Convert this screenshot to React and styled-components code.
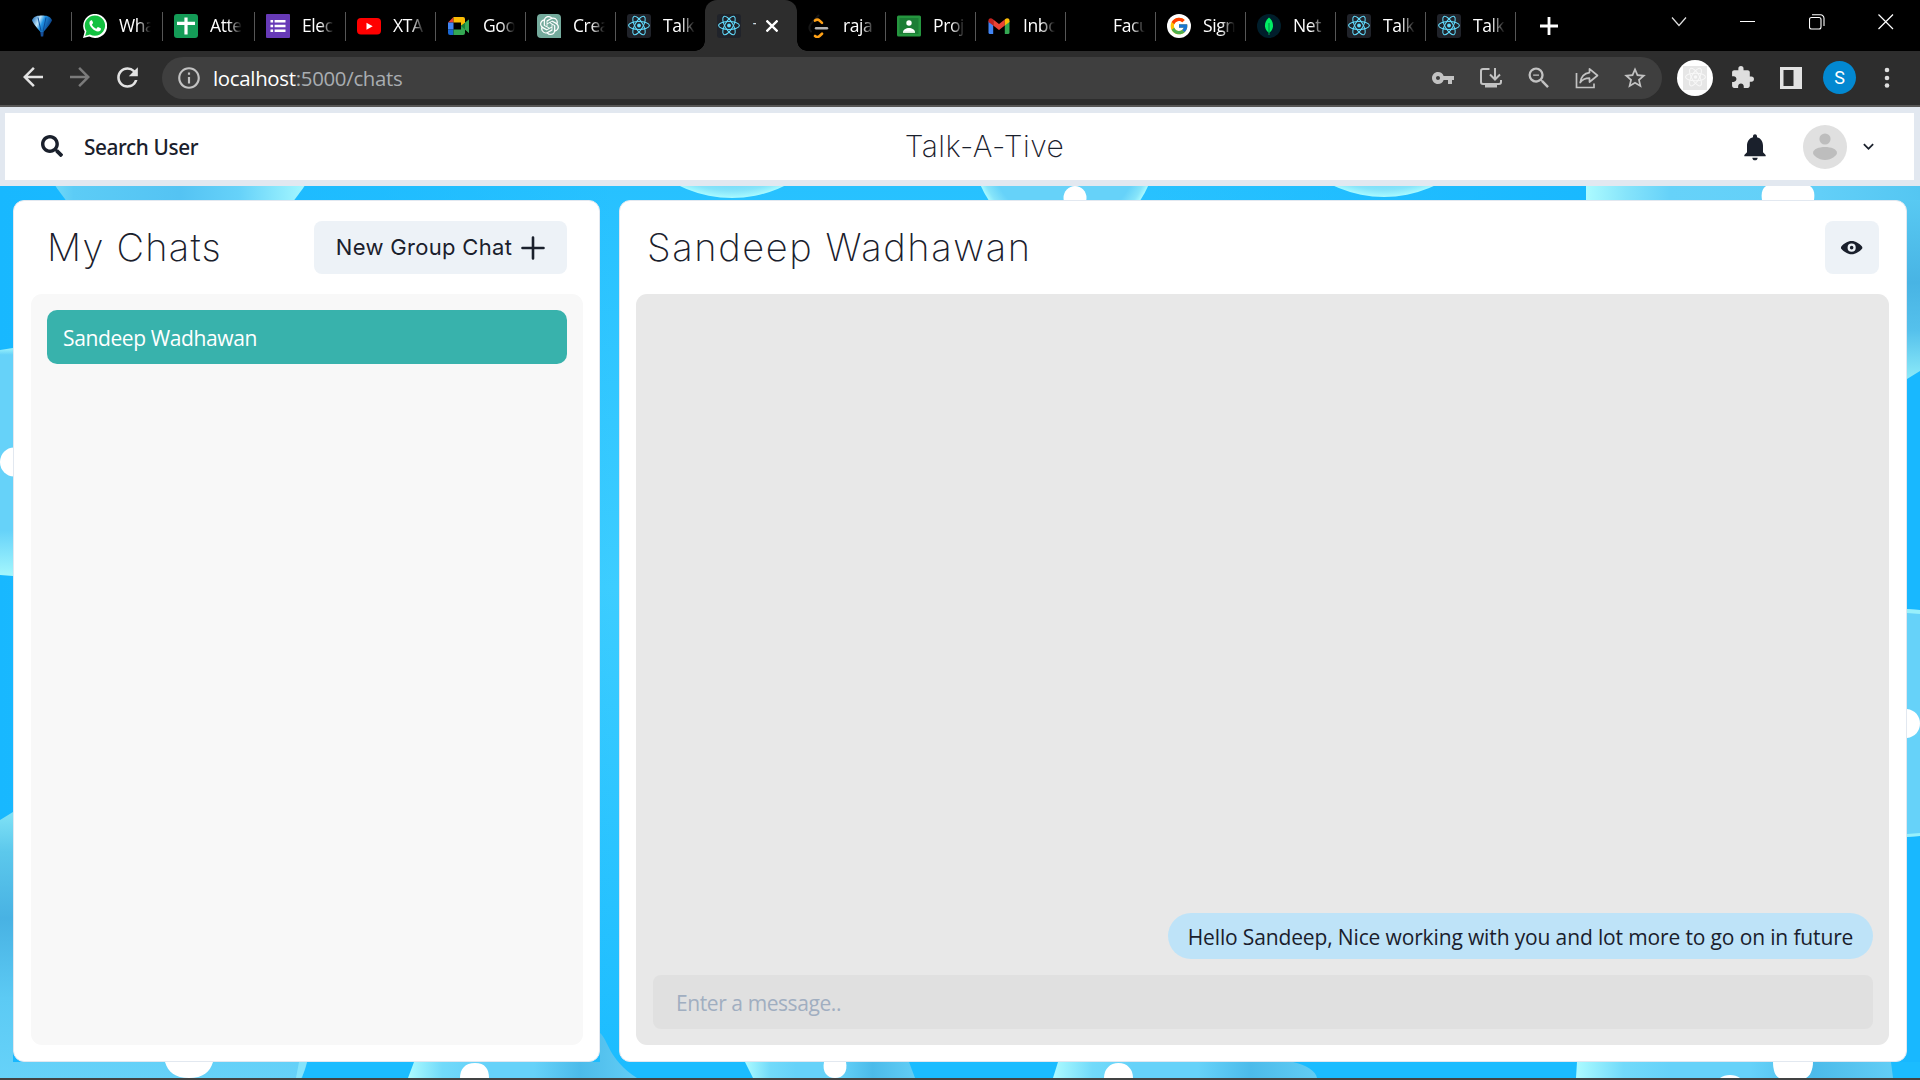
import React from 'react';
import styled, { createGlobalStyle, css } from 'styled-components';
import {
  MdVpnKey,
  MdZoomOut,
  MdStarBorder,
  MdExtension,
  MdRefresh,
  MdArrowBack,
  MdArrowForward,
  MdInfoOutline,
} from 'react-icons/md';
import { FaSearch } from 'react-icons/fa';
import { FcGoogle } from 'react-icons/fc';
import { SiOpenai } from 'react-icons/si';

const uiFont = "'Open Sans', 'Noto Sans', sans-serif";
const displayFont = "Inter, 'Open Sans', sans-serif";
const ink = '#1a202c';

const GlobalStyle = createGlobalStyle`
  *, *::before, *::after { box-sizing: border-box; }
  body { margin: 0; overflow: hidden; font-family: ${uiFont}; color: ${ink}; }
  svg { display: block; flex: none; }
  button, input { font: inherit; color: inherit; border: 0; padding: 0; background: none; }
`;

const Window = styled.div`
  display: flex;
  flex-direction: column;
  width: 1920px;
  height: 1080px;
  border-bottom: 2px solid #434343;
  overflow: hidden;
`;

/* ---------- tab strip ---------- */

const TabStrip = styled.div`
  display: flex;
  height: 51px;
  flex: none;
  background: #000;
`;

const Tab = styled.div`
  position: relative;
  display: flex;
  align-items: center;
  width: ${(p) => p.$width}px;
  padding-left: ${(p) => p.$pad ?? 11}px;
  color: #fff;
  ${(p) =>
    p.$divider &&
    css`
      &::after {
        content: '';
        position: absolute;
        right: 0;
        top: 12px;
        width: 1px;
        height: 29px;
        background: #565656;
      }
    `}
  ${(p) =>
    p.$active &&
    css`
      background: #2d2d2d;
      border-radius: 12px 12px 0 0;
      margin: 0 -1px;
      width: ${p.$width + 2}px;
      padding-left: 12px;
      &::before,
      &::after {
        content: '';
        position: absolute;
        bottom: 0;
        width: 10px;
        height: 10px;
      }
      &::before {
        left: -10px;
        background: radial-gradient(circle at 0 0, transparent 9.5px, #2d2d2d 10px);
      }
      &::after {
        right: -10px;
        background: radial-gradient(circle at 100% 0, transparent 9.5px, #2d2d2d 10px);
      }
    `}
`;

const Favicon = styled.div`
  display: flex;
  align-items: center;
  justify-content: center;
  width: 24px;
  height: 24px;
  flex: none;
  border-radius: ${(p) => p.$radius || 0};
  background: ${(p) => p.$bg || 'transparent'};
  color: ${(p) => p.$color || '#fff'};
`;

const TabTitle = styled.span`
  width: 32px;
  margin-left: 12px;
  padding-bottom: 1px;
  overflow: hidden;
  white-space: nowrap;
  font-size: 17.5px;
  line-height: 26px;
  letter-spacing: -0.4px;
  mask-image: linear-gradient(to right, #000 56%, transparent 100%);
`;

const ActiveTitle = styled.span`
  width: 3px;
  height: 18px;
  margin-left: 12px;
  overflow: hidden;
  font-size: 17.5px;
  line-height: 24px;
  color: #d8d8d8;
`;

const TabClose = styled.button`
  display: flex;
  margin-left: 10px;
`;

const NewTab = styled.button`
  display: flex;
  align-items: center;
  margin-left: 24px;
`;

const WindowControls = styled.div`
  display: flex;
  align-items: flex-start;
  gap: 48px;
  margin-left: auto;
  padding: 14px 26px 0 0;
`;

/* ---------- address bar ---------- */

const Toolbar = styled.div`
  display: flex;
  align-items: center;
  height: 56px;
  flex: none;
  padding: 0 21px 1px 20px;
  background: #2d2d2d;
  border-bottom: 2px solid #575655;
`;

const NavGroup = styled.div`
  display: flex;
  width: 142px;
  margin-left: -11px;
`;

const NavButton = styled.button`
  display: flex;
  justify-content: center;
  width: 48px;
  color: ${(p) => (p.$dim ? '#7b7b7b' : '#e2e2e2')};
`;

const Omnibox = styled.div`
  display: flex;
  align-items: center;
  width: 1500px;
  height: 42px;
  margin-left: 11px;
  padding: 0 14px;
  border-radius: 21px;
  background: #3f3f3f;
  color: #c2c2c2;
`;

const Url = styled.div`
  margin-left: 11px;
  font-size: 20.4px;
  line-height: 28px;
  letter-spacing: -0.3px;
  white-space: nowrap;
  color: #a9adb1;
  b { font-weight: 400; color: #fff; }
`;

const OmniActions = styled.div`
  display: flex;
  align-items: center;
  gap: 21px;
  margin-left: auto;
`;

const ActionSlot = styled.div`
  display: flex;
  align-items: center;
  justify-content: center;
  width: 27px;
  height: 27px;
`;

const Extensions = styled.div`
  display: flex;
  align-items: center;
  flex: 1;
  margin-left: 15px;
  color: #dedede;
`;

const ExtensionBadge = styled.div`
  display: flex;
  align-items: center;
  justify-content: center;
  width: 36px;
  height: 36px;
  margin-right: 17px;
  border-radius: 50%;
  background: #fff;
`;

const ExtensionIcon = styled.div`
  display: flex;
  align-items: center;
  justify-content: center;
  width: 24px;
  height: 24px;
  background: #e6e6e6;
`;

const SidePanelButton = styled.button`
  display: flex;
  margin: 0 21px 0 25px;
`;

const Profile = styled.div`
  width: 33px;
  height: 33px;
  border-radius: 50%;
  background: #0288d1;
  color: #fff;
  font: 400 18px/33px Roboto, sans-serif;
  text-align: center;
`;

const MenuButton = styled.button`
  display: flex;
  margin-left: auto;
`;

/* ---------- chat app ---------- */

const Page = styled.div`
  display: flex;
  flex-direction: column;
  flex: 1;
  min-height: 0;
`;

const Header = styled.header`
  display: grid;
  grid-template-columns: 1fr auto 1fr;
  align-items: center;
  height: 79px;
  flex: none;
  padding: 0 35px 0 35px;
  border: solid #e2e8f0;
  border-width: 6px 6px 6px 5px;
  background: #fff;
`;

const SearchButton = styled.button`
  display: flex;
  align-items: center;
  gap: 20px;
  font: 500 20.8px/32px 'Noto Sans', sans-serif;
  letter-spacing: -0.4px;
`;

const SearchIcon = styled(FaSearch)`
  margin: 0 1px 2px 1px;
`;

const Brand = styled.h1`
  margin: 0 0 2px 50px;
  font: 250 30px/40px ${displayFont};
  letter-spacing: 0.5px;
`;

const HeaderRight = styled.div`
  display: flex;
  align-items: center;
  justify-content: flex-end;
`;

const Avatar = styled.div`
  width: 44px;
  height: 44px;
  margin: 0 11px 0 32px;
  border-radius: 50%;
  overflow: hidden;
  background: #e0e0e0;
`;

const Workspace = styled.main`
  display: grid;
  grid-template: 892px / 1920px;
  flex: 1;
`;

const Backdrop = styled.svg`
  grid-area: 1 / 1;
`;

const Columns = styled.div`
  grid-area: 1 / 1;
  z-index: 1;
  display: flex;
  justify-content: space-between;
  padding: 14px 13px 16px;
`;

const Panel = styled.section`
  display: flex;
  flex-direction: column;
  width: ${(p) => p.$width}px;
  padding: 20px ${(p) => p.$right}px 16px ${(p) => p.$left}px;
  border: 1px solid #e2e8f0;
  border-radius: 11px;
  background: #fff;
`;

const PanelHeader = styled.div`
  display: flex;
  align-items: center;
  justify-content: space-between;
  height: 53px;
  margin-bottom: 20px;
  padding: 0 ${(p) => p.$right}px 0 ${(p) => p.$left}px;
`;

const PanelTitle = styled.h2`
  margin: 0;
  font: 200 38px/53px ${displayFont};
  letter-spacing: ${(p) => p.$spacing}px;
  white-space: nowrap;
`;

const SoftButton = styled.button`
  display: flex;
  align-items: center;
  justify-content: center;
  gap: 9px;
  width: ${(p) => p.$width}px;
  height: 53px;
  border-radius: 8px;
  background: #edf2f7;
  font: 400 22px/32px ${displayFont};
  letter-spacing: 0.32px;
  white-space: nowrap;
`;

const ButtonLabel = styled.span`
  padding-bottom: 2px;
`;

const PanelBody = styled.div`
  display: flex;
  flex-direction: column;
  justify-content: ${(p) => p.$justify || 'flex-start'};
  flex: 1;
  padding: 16px 16px 16px ${(p) => p.$left || 16}px;
  border-radius: 11px;
  background: ${(p) => p.$bg};
`;

const ChatItem = styled.div`
  height: 54px;
  padding: 0 16px;
  border-radius: 10px;
  background: #38b2ac;
  color: #fff;
  font-size: 21px;
  line-height: 57px;
  letter-spacing: -0.38px;
`;

const Bubble = styled.div`
  align-self: flex-end;
  width: 705px;
  height: 46px;
  border-radius: 27px;
  background: #bee3f8;
  font-size: 21px;
  line-height: 49px;
  letter-spacing: -0.14px;
  text-align: center;
  white-space: nowrap;
`;

const MessageInput = styled.input`
  width: 100%;
  height: 54px;
  margin-top: 16px;
  padding: 2px 23px 0;
  border-radius: 8px;
  background: #e0e0e0;
  font-size: 21px;
  letter-spacing: -0.42px;
  &::placeholder { color: #a0aec0; opacity: 1; }
`;

/* ---------- drawings ---------- */

const Atom = ({ color = '#61dafb', size = 24 }) => (
  <svg width={size} height={size} viewBox="0 0 24 24" fill="none" stroke={color} strokeWidth="1.05">
    <circle cx="12" cy="11.5" r="1.9" fill={color} stroke="none" />
    <ellipse cx="12" cy="11.5" rx="10.4" ry="4" />
    <ellipse cx="12" cy="11.5" rx="10.4" ry="4" transform="rotate(60 12 11.5)" />
    <ellipse cx="12" cy="11.5" rx="10.4" ry="4" transform="rotate(120 12 11.5)" />
  </svg>
);

const Balloon = () => (
  <svg width="24" height="24" viewBox="0 0 24 24">
    <defs>
      <linearGradient id="balloon" x1="0" y1="0" x2="1" y2="0.4">
        <stop offset="0" stopColor="#0d5fae" />
        <stop offset="0.4" stopColor="#bfe6fb" />
        <stop offset="0.6" stopColor="#1f93e6" />
        <stop offset="1" stopColor="#0a3f86" />
      </linearGradient>
    </defs>
    <path d="M2 6C4 2 8 1.5 12 1.5S20 2 22 6c0 2-6 9-8.5 12h-3C8 15 2 8 2 6z" fill="url(#balloon)" />
    <path d="M8 3.5L11 17M16 3.5L13.2 17" stroke="#0c4f9c" strokeWidth="1" />
    <path d="M10.3 18h3.4l-.5 4.5h-2.3z" fill="#164f99" />
  </svg>
);

const WhatsApp = () => (
  <svg width="24" height="24" viewBox="0 0 24 24">
    <path d="M0 24l1.7-6.2A12 12 0 1 1 6.3 22.4z" fill="#fff" />
    <path d="M2.1 21.9l1.3-4.6A10.2 10.2 0 1 1 7 20.6z" fill="#13c140" />
    <path
      d="M8.3 6.3c-.5 0-1.9.9-1.9 2.8 0 2 1.5 3.9 2.9 5.4 1.6 1.6 3.7 2.9 5.7 2.9 1.8 0 2.9-1.2 2.9-2.4 0-.6-.2-.7-.6-.9l-1.9-.9c-.5-.2-.7-.1-1 .3l-.8 1c-.3.3-.5.3-.9.1-1.5-.7-2.9-2-3.7-3.5-.2-.4-.1-.6.2-.9l.7-.9c.2-.2.2-.5.1-.8l-.8-1.8c-.2-.4-.4-.4-.9-.4z"
      fill="#fff"
    />
  </svg>
);

const Cross = () => (
  <svg width="24" height="24" viewBox="0 0 24 24">
    <path d="M12 3.5v17M3 9.3h18" stroke="#fff" strokeWidth="3.2" />
  </svg>
);

const FormLines = () => (
  <svg width="24" height="24" viewBox="0 0 24 24" fill="#fff">
    <path d="M4.5 6h2.6v2.6H4.5zM4.5 10.700h2.6v2.6H4.5zM4.5 15.400h2.6V18H4.5zM8.6 6H19.5v2.6H8.6zM8.6 10.700h10.9v2.6H8.6zM8.6 15.400h10.9V18H8.6z" />
  </svg>
);

const YouTube = () => (
  <svg width="24" height="24" viewBox="0 0 24 24">
    <rect x="0" y="4" width="24" height="16.5" rx="4" fill="#f00" />
    <path d="M9.5 8.7v7l6.2-3.500z" fill="#fff" />
  </svg>
);

const Meet = () => (
  <svg width="24" height="24" viewBox="0 0 24 24">
    <path d="M1 8.5L6.5 3v5.5z" fill="#ea4335" />
    <path d="M1 8.5h5.5v7H1z" fill="#4285f4" />
    <path d="M1 15.5h5.5V21H3a2 2 0 0 1-2-2z" fill="#1967d2" />
    <path d="M6.5 3H16a2 2 0 0 1 2 2v4l-4 3V8.5H6.5z" fill="#fbbc04" />
    <path d="M6.5 15.5H14V12l4-3v10a2 2 0 0 1-2 2H6.5z" fill="#34a853" />
    <path d="M14 12l8-6.5v13.5z" fill="#188038" />
    <path d="M18 8.8l4-3.3V19l-4-3.400z" fill="#34a853" />
  </svg>
);

const Leetcode = () => (
  <svg width="24" height="24" viewBox="0 0 24 24" fill="none" strokeLinecap="round">
    <path d="M11.500 1.500L4 9.500c-2 3-2 6 0 8" stroke="#161616" strokeWidth="2" />
    <path d="M8 6.600c1.500-1.300 3.200-1.300 4.600 0l2.400 2.300" stroke="#ffa116" strokeWidth="2.6" />
    <path d="M8 22c1.500 1.300 3.200 1.300 4.600 0l2.400-2.300" stroke="#ffa116" strokeWidth="2.6" />
    <path d="M9 14.200h11" stroke="#b3b3b3" strokeWidth="2.4" />
  </svg>
);

const Classroom = () => (
  <svg width="24" height="24" viewBox="0 0 24 24">
    <rect y="1.5" width="24" height="21" rx="1.5" fill="#25963f" />
    <rect x="2.5" y="4" width="19" height="16" fill="#1b7d35" />
    <circle cx="12" cy="9" r="2.7" fill="#fff" />
    <path d="M6 18.5c0-6 12-6 12 0z" fill="#fff" />
    <path d="M6 17.500h12v1.500H6z" fill="#d7ecd9" />
  </svg>
);

const Gmail = () => (
  <svg width="24" height="24" viewBox="0 0 24 24">
    <path d="M1.5 7v11.500A1.500 1.500 0 0 0 3 20h3.200V10.500z" fill="#4285f4" />
    <path d="M22.500 7v11.500A1.500 1.500 0 0 1 21 20h-3.200V10.500z" fill="#34a853" />
    <path d="M6.200 5.500L12 10l5.800-4.500v6L12 16l-5.800-4.500z" fill="#ea4335" />
    <path d="M1.500 6.500c0-2.200 2.500-3 4.100-1.600l.6.600v6L1.500 8z" fill="#c5221f" />
    <path d="M22.500 6.500c0-2.200-2.500-3-4.100-1.600l-.6.600v6L22.500 8z" fill="#fbbc04" />
  </svg>
);

const MongoLeaf = () => (
  <svg width="24" height="24" viewBox="0 0 24 24">
    <path d="M12 3.500c3.400 3 4.200 6 4 9-.2 2.600-1.600 4.700-4 6.500-2.400-1.800-3.800-3.900-4-6.500-.2-3 .6-6 4-9z" fill="#00ed64" />
    <path d="M12 9v12" stroke="#00934a" strokeWidth="1.1" />
  </svg>
);

const InstallIcon = () => (
  <svg width="24" height="24" viewBox="0 0 24 24" fill="none" stroke="#c2c2c2" strokeWidth="2">
    <path d="M10.500 3H4a2 2 0 0 0-2 2v11a2 2 0 0 0 2 2h16a2 2 0 0 0 2-2v-2M16 2v11M11 8.500l5 5 5-5" />
    <path d="M6 18.500h12v3H6z" fill="#c2c2c2" stroke="none" />
  </svg>
);

const ShareIcon = () => (
  <svg width="25" height="24" viewBox="0 0 25 24" fill="none" stroke="#c2c2c2" strokeWidth="1.7">
    <path d="M2.500 7v14.500h17.500v-4" />
    <path d="M15.500 2.800l8 6.700-8 6.500v-3.800c-4.500 0-7.300 1.300-9.300 4.300.8-5.500 3.800-9.200 9.300-9.900z" strokeLinejoin="round" />
  </svg>
);

const Face = () => (
  <svg width="44" height="44" viewBox="0 0 44 44" fill="#bdbdbd">
    <circle cx="22" cy="14" r="5.6" />
    <path d="M10 28c0-8 24-8 24 0 0 2-5 7-12 7s-12-5-12-7z" />
  </svg>
);

const Bubbles = () => (
  <Backdrop width="1920" height="892" viewBox="0 186 1920 892">
    <defs>
      <linearGradient id="sky" x1="0" y1="0" x2="0" y2="1">
        <stop offset="0" stopColor="#27c1ff" />
        <stop offset="0.45" stopColor="#3dcdff" />
        <stop offset="1" stopColor="#1bbcff" />
      </linearGradient>
      <linearGradient id="edge" x1="0" y1="0" x2="1" y2="0">
        <stop offset="0" stopColor="#18b8ff" />
        <stop offset="0.2" stopColor="#18b8ff" stopOpacity="0.5" />
        <stop offset="0.32" stopColor="#18b8ff" stopOpacity="0" />
        <stop offset="0.6" stopColor="#18b8ff" stopOpacity="0" />
        <stop offset="0.85" stopColor="#18b8ff" />
      </linearGradient>
      <radialGradient id="glow">
        <stop offset="0" stopColor="#66d2f9" />
        <stop offset="0.82" stopColor="#66d2f9" />
        <stop offset="0.94" stopColor="#86e4fa" />
        <stop offset="1" stopColor="#a9faff" />
      </radialGradient>
      <linearGradient id="shadeTop" x1="0" y1="0" x2="1" y2="0">
        <stop offset="0" stopColor="#8be8fa" />
        <stop offset="0.14" stopColor="#5cccf6" />
        <stop offset="0.5" stopColor="#54c3f3" />
        <stop offset="0.7" stopColor="#66d2f9" />
        <stop offset="0.92" stopColor="#a4f7ff" />
        <stop offset="1" stopColor="#aefcff" />
      </linearGradient>
      <linearGradient id="shadeRight" x1="0" y1="0" x2="0" y2="1">
        <stop offset="0" stopColor="#5bcdf5" />
        <stop offset="0.5" stopColor="#48b4e4" />
        <stop offset="0.75" stopColor="#55c1ec" />
        <stop offset="1" stopColor="#8ceaf8" />
      </linearGradient>
      <linearGradient id="shadeCorner" x1="0" y1="0" x2="1" y2="0">
        <stop offset="0" stopColor="#acfbff" />
        <stop offset="0.12" stopColor="#86e4fb" />
        <stop offset="0.25" stopColor="#66d2f9" />
        <stop offset="0.7" stopColor="#62cff8" />
        <stop offset="1" stopColor="#54c6f2" />
      </linearGradient>
      <linearGradient id="glowLeft" x1="0" y1="0" x2="1" y2="0">
        <stop offset="0" stopColor="#acfbff" />
        <stop offset="0.15" stopColor="#72dafa" />
        <stop offset="0.3" stopColor="#66d2f9" />
        <stop offset="0.55" stopColor="#66d2f9" />
        <stop offset="0.75" stopColor="#4cbbea" />
        <stop offset="1" stopColor="#62cdf5" />
      </linearGradient>
      <linearGradient id="cornerLeft" x1="0" y1="0" x2="0" y2="1">
        <stop offset="0" stopColor="#80e2f6" />
        <stop offset="0.15" stopColor="#5cc8ec" />
        <stop offset="0.4" stopColor="#48b2e3" />
        <stop offset="0.7" stopColor="#5ccaf4" />
        <stop offset="1" stopColor="#66d2f9" />
      </linearGradient>
      <linearGradient id="sideLeft" x1="0" y1="0" x2="0" y2="1">
        <stop offset="0" stopColor="#9cf3fb" />
        <stop offset="0.03" stopColor="#66d2f9" />
        <stop offset="0.8" stopColor="#66d2f9" />
        <stop offset="1" stopColor="#a4f7fd" />
      </linearGradient>
    </defs>
    <rect y="186" width="1920" height="892" fill="url(#sky)" />
    <rect y="186" width="1920" height="892" fill="url(#edge)" />
    <rect y="1062" x="300" width="1620" height="16" fill="#1bbcff" />

    <ellipse cx="180" cy="106" rx="148" ry="148" fill="url(#shadeTop)" />
    <circle cx="732" cy="79" r="119" fill="url(#glow)" />
    <circle cx="1064.5" cy="150" r="91" fill="url(#glow)" />
    <ellipse cx="1075" cy="198" rx="11.5" ry="12" fill="#fff" />
    <circle cx="1384" cy="79" r="118" fill="url(#glow)" />
    <path d="M1700 186h220v185l-13 8z" fill="url(#shadeRight)" />
    <path d="M1586 186h334v14h-334z" fill="url(#shadeCorner)" />
    <path d="M1762 200c-1-7 0-11 4-14h44c4 3 5 7 4 14z" fill="#fff" />

    <path d="M0 350l13-2v228l-13-1z" fill="url(#sideLeft)" />
    <ellipse cx="14" cy="462" rx="14" ry="14.5" fill="#fff" />

    <path d="M0 820l13-8v250h294c-1 6-3 11-6 16H0z" fill="url(#cornerLeft)" />
    <path d="M299 1062h8l-5 16h-6z" fill="#a0f3fd" opacity="0.55" />
    <path d="M165 1062h48c-3 10-10 16-24 16s-21-6-24-16z" fill="#fff" />

    <path d="M414 1062h186v-29c9 8 8 26 37 45H408z" fill="url(#glowLeft)" />
    <path d="M460 1078c0-9 5-15 15-15s14 6 14 15z" fill="#fff" />

    <path d="M745 1062h164l6 16H753z" fill="url(#glowLeft)" />
    <path d="M824 1062h22c2 10-3 16-11 16s-13-6-11-16z" fill="#fff" />

    <path d="M1058 1062h235c13 3 23 9 24 16h-264z" fill="url(#glowLeft)" />
    <path d="M1104 1078c0-9 6-15 14.500-15s14.500 6 14.500 15z" fill="#fff" />

    <path d="M1577 1062h314l2 16h-317z" fill="url(#glowLeft)" />
    <path d="M1773 1062h40c0 8-3 14-7 16h-27c-4-2-6-8-6-16z" fill="#fff" />
    <path d="M1720 1078c5-4 15-4 20 0z" fill="#fff" />

    <path d="M1907 609l13 1v226l-13 1z" fill="#66d2f9" />
    <path d="M1907 609l13 1v4l-13-1zM1907 834l13-1v3l-13 1z" fill="#98f0fb" />
    <path d="M1907 709c8 1 13 7 13 14.500s-5 13.500-13 14.500z" fill="#fff" />
  </Backdrop>
);

/* ---------- data ---------- */

const reactTab = { title: 'Talk', icon: <Atom />, bg: '#20232a', radius: '3px' };

const tabs = [
  { width: 91, title: 'Wha', icon: <WhatsApp /> },
  { width: 92, title: 'Atte', icon: <Cross />, bg: '#149c57', radius: '3px' },
  { width: 91, title: 'Elec', icon: <FormLines />, bg: '#673ab7', radius: '1px' },
  { width: 90, title: 'XTA', icon: <YouTube /> },
  { width: 90, title: 'Goo', icon: <Meet /> },
  { width: 90, title: 'Crea', icon: <SiOpenai size={19} />, bg: '#74aa9c', radius: '4px 4px 0 4px' },
  { width: 90, ...reactTab, plain: true },
  { width: 90, ...reactTab, title: 'T', active: true },
  { width: 90, title: 'raja', icon: <Leetcode /> },
  { width: 90, title: 'Proj', icon: <Classroom /> },
  { width: 90, title: 'Inbo', icon: <Gmail /> },
  { width: 90, title: 'Facu', icon: null },
  { width: 90, title: 'Sign', icon: <FcGoogle size={20} />, bg: '#fff', radius: '50%' },
  { width: 90, title: 'Net', icon: <MongoLeaf />, bg: '#001e2b', radius: '50%' },
  { width: 90, ...reactTab },
  { width: 90, ...reactTab },
];

function BrowserTabs() {
  return (
    <TabStrip>
      <Tab $width={72} $pad={30} $divider>
        <Favicon><Balloon /></Favicon>
      </Tab>
      {tabs.map((t, i) => (
        <Tab key={i} $width={t.width} $active={t.active} $divider={!t.active && !t.plain}>
          <Favicon $bg={t.bg} $radius={t.radius}>{t.icon}</Favicon>
          {t.active ? (
            <>
              <ActiveTitle>{t.title}</ActiveTitle>
              <TabClose>
                <svg width="12" height="12" viewBox="0 0 12 12" stroke="#fff" strokeWidth="2.3">
                  <path d="M0.5 0.5l11 11M11.5 0.5l-11 11" />
                </svg>
              </TabClose>
            </>
          ) : (
            <TabTitle>{t.title}</TabTitle>
          )}
        </Tab>
      ))}
      <NewTab>
        <svg width="18" height="18" viewBox="0 0 18 18" stroke="#fff" strokeWidth="2.8">
          <path d="M9 0v18M0 9h18" />
        </svg>
      </NewTab>
      <WindowControls>
        <svg width="21" height="16" viewBox="0 0 21 16" fill="none" stroke="#e0e0e0" strokeWidth="1.2">
          <path d="M1 3.500l7 8 7-8" />
        </svg>
        <svg width="21" height="16" viewBox="0 0 21 16" stroke="#fff" strokeWidth="1">
          <path d="M0 7.500h15" />
        </svg>
        <svg width="21" height="16" viewBox="0 0 21 16" fill="none" stroke="#fff" strokeWidth="1.1">
          <rect x="0.5" y="3.5" width="11.5" height="11.5" rx="2" />
          <path d="M3 .8h8.500a3.500 3.500 0 0 1 3.500 3.500V12" />
        </svg>
        <svg width="16" height="16" viewBox="0 0 16 16" stroke="#fff" strokeWidth="1.2">
          <path d="M0.500 0.500l14.500 14.500M15 0.500L0.500 15" />
        </svg>
      </WindowControls>
    </TabStrip>
  );
}

function AddressBar() {
  return (
    <Toolbar>
      <NavGroup>
        <NavButton><MdArrowBack size={30} /></NavButton>
        <NavButton $dim><MdArrowForward size={30} /></NavButton>
        <NavButton><MdRefresh size={31} /></NavButton>
      </NavGroup>
      <Omnibox>
        <MdInfoOutline size={26} />
        <Url><b>localhost</b>:5000/chats</Url>
        <OmniActions>
          <ActionSlot><MdVpnKey size={24} /></ActionSlot>
          <ActionSlot><InstallIcon /></ActionSlot>
          <ActionSlot><MdZoomOut size={28} /></ActionSlot>
          <ActionSlot><ShareIcon /></ActionSlot>
          <ActionSlot><MdStarBorder size={26} /></ActionSlot>
        </OmniActions>
      </Omnibox>
      <Extensions>
        <ExtensionBadge>
          <ExtensionIcon><Atom color="#f8f8f8" size={23} /></ExtensionIcon>
        </ExtensionBadge>
        <MdExtension size={25} />
        <SidePanelButton>
          <svg width="22" height="22" viewBox="0 0 22 22">
            <path d="M0 0h22v22H0zM3.500 3v16h10V3z" fill="#e2e2e2" fillRule="evenodd" />
          </svg>
        </SidePanelButton>
        <Profile>S</Profile>
        <MenuButton>
          <svg width="24" height="22" viewBox="0 0 24 22" fill="#dedede">
            <circle cx="12" cy="3" r="2.3" />
            <circle cx="12" cy="11" r="2.3" />
            <circle cx="12" cy="18.5" r="2.3" />
          </svg>
        </MenuButton>
      </Extensions>
    </Toolbar>
  );
}

function AppHeader() {
  return (
    <Header>
      <SearchButton>
        <SearchIcon size={22} />
        Search User
      </SearchButton>
      <Brand>Talk-A-Tive</Brand>
      <HeaderRight>
        <svg width="32" height="32" viewBox="0 0 24 24" fill={ink}>
          <path d="M12 22c1.100 0 2-.9 2-2h-4c0 1.100.9 2 2 2zm6-6v-5c0-3.070-1.640-5.640-4.500-6.320V4c0-.83-.67-1.500-1.500-1.500s-1.500.67-1.500 1.500v.68C7.630 5.360 6 7.920 6 11v5l-2 2v1h16v-1l-2-2z" />
        </svg>
        <Avatar><Face /></Avatar>
        <svg width="21" height="21" viewBox="0 0 24 24" fill={ink}>
          <path d="M16.590 8.590L12 13.170 7.410 8.590 6 10l6 6 6-6z" />
        </svg>
      </HeaderRight>
    </Header>
  );
}

export default function App() {
  return (
    <Window>
      <GlobalStyle />
      <BrowserTabs />
      <AddressBar />
      <Page>
        <AppHeader />
        <Workspace>
          <Bubbles />
          <Columns>
            <Panel $width={587} $left={17} $right={16}>
              <PanelHeader $left={16} $right={16}>
                <PanelTitle $spacing={1.25}>My Chats</PanelTitle>
                <SoftButton $width={253}>
                  <ButtonLabel>New Group Chat</ButtonLabel>
                  <svg width="24" height="24" viewBox="0 0 24 24" stroke={ink} strokeWidth="2.6" strokeLinecap="round">
                    <path d="M12 1.500v21M1.500 12h21" />
                  </svg>
                </SoftButton>
              </PanelHeader>
              <PanelBody $bg="#f8f8f8">
                <ChatItem>Sandeep Wadhawan</ChatItem>
              </PanelBody>
            </Panel>
            <Panel $width={1288} $left={16} $right={17}>
              <PanelHeader $left={11} $right={10}>
                <PanelTitle $spacing={1.6}>Sandeep Wadhawan</PanelTitle>
                <SoftButton $width={54}>
                  <svg width="21.3" height="21.3" viewBox="0 0 24 24" fill={ink}>
                    <path d="M23.432 10.524C20.787 7.614 16.400 4.538 12 4.600 7.600 4.537 3.213 7.615.568 10.524a2.211 2.211 0 0 0 0 2.948C3.182 16.351 7.507 19.400 11.839 19.400h.308c4.347 0 8.671-3.049 11.288-5.929a2.210 2.210 0 0 0-.003-2.947ZM7.400 12A4.600 4.600 0 1 1 12 16.600 4.600 4.600 0 0 1 7.400 12Z" />
                    <circle cx="12" cy="12" r="2" />
                  </svg>
                </SoftButton>
              </PanelHeader>
              <PanelBody $bg="#e8e8e8" $justify="flex-end" $left={17}>
                <Bubble>Hello Sandeep, Nice working with you and lot more to go on in future</Bubble>
                <MessageInput placeholder="Enter a message.." />
              </PanelBody>
            </Panel>
          </Columns>
        </Workspace>
      </Page>
    </Window>
  );
}
